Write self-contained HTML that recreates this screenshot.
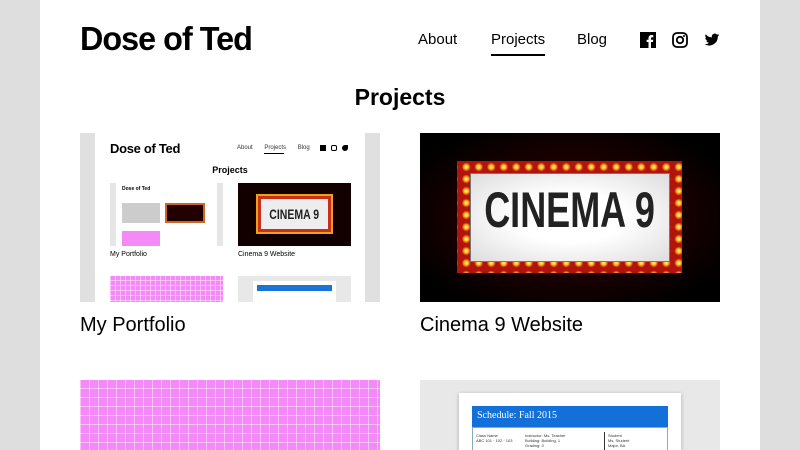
<!DOCTYPE html>
<html><head><meta charset="utf-8"><style>
*{margin:0;padding:0;box-sizing:border-box}
html,body{width:800px;height:450px;overflow:hidden}
body{background:#dedede;font-family:"Liberation Sans",sans-serif;color:#000;position:relative}
.page{position:absolute;left:40px;top:0;width:720px;height:450px;background:#fff}
.abs{position:absolute}
.title{left:80px;top:20px;font-size:33px;font-weight:bold;letter-spacing:-1px;transform:scaleX(0.98);transform-origin:left}
.nav{top:31px;font-size:15px}
.h1{top:84px;left:0;width:800px;text-align:center;font-size:23px;font-weight:bold}
.cap{font-size:20px;top:314px}
.img{overflow:hidden}
.pink{background-color:#f48af7;background-image:linear-gradient(90deg,rgba(255,255,255,.45) 1px,transparent 1px),linear-gradient(0deg,rgba(255,255,255,.45) 1px,transparent 1px);background-size:9px 9px}
.bulbs{background:#b0140c radial-gradient(circle,#fff6a0 0,#ffc020 2px,#e05010 3.5px,transparent 4.5px) 0 0/12.5px 12px}
</style></head><body>
<div class="page"></div>
<div class="abs title">Dose of Ted</div>
<div class="abs nav" style="left:418px">About</div>
<div class="abs nav" style="left:491px">Projects</div>
<div class="abs" style="left:491px;top:54px;width:54px;height:2px;background:#000"></div>
<div class="abs nav" style="left:577px">Blog</div>
<svg class="abs" style="left:640px;top:32px" width="16" height="16" viewBox="0 0 16 16"><rect width="16" height="16" fill="#000"/><path d="M11 16V10h2l.3-2.3H11V6.3c0-.7.2-1.1 1.1-1.1h1.2V3.1c-.2 0-.9-.1-1.8-.1-1.8 0-3 1.1-3 3.1v1.6H6.6V10h1.9v6z" fill="#fff"/></svg>
<svg class="abs" style="left:672px;top:32px" width="16" height="16" viewBox="0 0 16 16"><rect x="1" y="1" width="14" height="14" rx="4" fill="none" stroke="#000" stroke-width="1.8"/><circle cx="8" cy="8" r="3.2" fill="none" stroke="#000" stroke-width="1.8"/><circle cx="12" cy="4" r="1" fill="#000"/></svg>
<svg class="abs" style="left:704px;top:32px" width="16" height="16" viewBox="0 0 24 24"><path d="M23 4.6c-.8.4-1.7.6-2.6.7.9-.6 1.6-1.4 2-2.5-.9.5-1.9.9-2.9 1.1a4.5 4.5 0 0 0-7.7 4.1C8 7.8 4.7 6 2.5 3.3a4.5 4.5 0 0 0 1.4 6c-.7 0-1.4-.2-2-.6 0 2.2 1.6 4 3.6 4.4-.7.2-1.4.2-2 .1.6 1.8 2.2 3.1 4.2 3.1A9 9 0 0 1 1 18.2 12.8 12.8 0 0 0 20.7 7.4v-.6c.9-.6 1.7-1.4 2.3-2.2z" fill="#000"/></svg>
<div class="abs h1">Projects</div>

<div class="abs img" style="left:80px;top:133px;width:300px;height:169px;background:#e0e0e0">
 <div class="abs" style="left:15px;top:0;width:270px;height:169px;background:#fff"></div>
 <div class="abs" style="left:30px;top:8px;font:bold 13px 'Liberation Sans',sans-serif;letter-spacing:-.3px">Dose of Ted</div>
 <div class="abs" style="left:157px;top:12px;font:6px 'Liberation Sans',sans-serif;color:#333;white-space:nowrap">About&nbsp;&nbsp;&nbsp;&nbsp;&nbsp;&nbsp; Projects&nbsp;&nbsp;&nbsp;&nbsp;&nbsp;&nbsp; Blog</div>
 <div class="abs" style="left:184px;top:20px;width:20px;height:1px;background:#000"></div>
 <div class="abs" style="left:240px;top:12px;width:6px;height:6px;background:#000"></div>
 <div class="abs" style="left:251px;top:12px;width:6px;height:6px;border:1px solid #000;border-radius:2px"></div>
 <div class="abs" style="left:262px;top:12px;width:6px;height:6px;background:#000;border-radius:50% 10% 50% 50%"></div>
 <div class="abs" style="left:0;top:32px;width:300px;text-align:center;font:bold 9px 'Liberation Sans',sans-serif">Projects</div>
 <div class="abs" style="left:30px;top:50px;width:113px;height:63px;background:#e6e6e6"><div class="abs" style="left:6px;top:0;width:101px;height:63px;background:#fff"></div><div class="abs" style="left:12px;top:3px;font:bold 5px sans-serif">Dose of Ted</div><div class="abs" style="left:12px;top:20px;width:38px;height:20px;background:#ccc"></div><div class="abs" style="left:55px;top:20px;width:40px;height:20px;background:#200;border:2px solid #c62"></div><div class="abs" style="left:12px;top:48px;width:38px;height:15px;background:#f48af7"></div></div>
 <div class="abs" style="left:158px;top:50px;width:113px;height:63px;background:#120000"><div class="abs" style="left:18px;top:11px;width:77px;height:40px;background:#c8301a;border:2px solid #f0a020"></div><div class="abs" style="left:23px;top:16px;width:67px;height:30px;background:#eee;font:bold 14px 'Liberation Sans',sans-serif;text-align:center;line-height:30px;color:#222;white-space:nowrap"><span style="display:inline-block;transform:scaleX(.75)">CINEMA 9</span></div></div>
 <div class="abs" style="left:30px;top:118px;font:7px 'Liberation Sans',sans-serif">My Portfolio</div>
 <div class="abs" style="left:158px;top:118px;font:7px 'Liberation Sans',sans-serif">Cinema 9 Website</div>
 <div class="abs pink" style="left:30px;top:143px;width:113px;height:30px;background-size:5px 5px"></div>
 <div class="abs" style="left:158px;top:143px;width:113px;height:30px;background:#e8e8e8"><div class="abs" style="left:15px;top:5px;width:83px;height:25px;background:#fff"></div><div class="abs" style="left:19px;top:9px;width:75px;height:6px;background:#1a73d9"></div></div>
</div>
<div class="abs cap" style="left:80px">My Portfolio</div>

<div class="abs img" style="left:420px;top:133px;width:300px;height:169px;background:radial-gradient(ellipse at 50% 50%,#3a0000 0,#1a0000 50%,#000 85%)">
 <div class="abs bulbs" style="left:37px;top:28px;width:225px;height:112px;background-position:3px 0"></div>
 <div class="abs" style="left:50px;top:40px;width:200px;height:89px;background:radial-gradient(ellipse,#fff 40%,#ddd 100%);border:1px solid #777"></div>
 <div class="abs" style="left:0;top:48px;width:300px;height:89px;text-align:center;line-height:89px;font:bold 50px 'Liberation Sans',sans-serif;color:#222;white-space:nowrap"><span style="display:inline-block;transform:scaleX(.72)">CINEMA 9</span></div>
</div>
<div class="abs cap" style="left:420px">Cinema 9 Website</div>

<div class="abs pink" style="left:80px;top:380px;width:300px;height:70px"></div>
<div class="abs img" style="left:420px;top:380px;width:300px;height:70px;background:#e8e8e8">
 <div class="abs" style="left:39px;top:13px;width:222px;height:60px;background:#fff;box-shadow:0 1px 4px rgba(0,0,0,.25)"></div>
 <div class="abs" style="left:52px;top:26px;width:196px;height:21px;background:#1270d8;color:#fff;font:10px 'Liberation Serif',serif;padding:4px 5px">Schedule: Fall 2015</div>
 <div class="abs" style="left:52px;top:47px;width:196px;height:30px;border:1px solid #8ab"></div>
 <div class="abs" style="left:56px;top:53px;font:4px sans-serif;color:#333;line-height:5px">Class Name<br>ABC 101 · 102 · 103</div>
 <div class="abs" style="left:105px;top:53px;font:4px sans-serif;color:#333;line-height:5px">Instructor: Ms. Teacher<br>Building: Building, 1<br>Grading: 3</div>
 <div class="abs" style="left:184px;top:52px;width:1px;height:20px;background:#333"></div>
 <div class="abs" style="left:188px;top:53px;font:4px sans-serif;color:#333;line-height:5px">Student<br>Ms. Student<br>Major, BA</div>
</div>
</body></html>
